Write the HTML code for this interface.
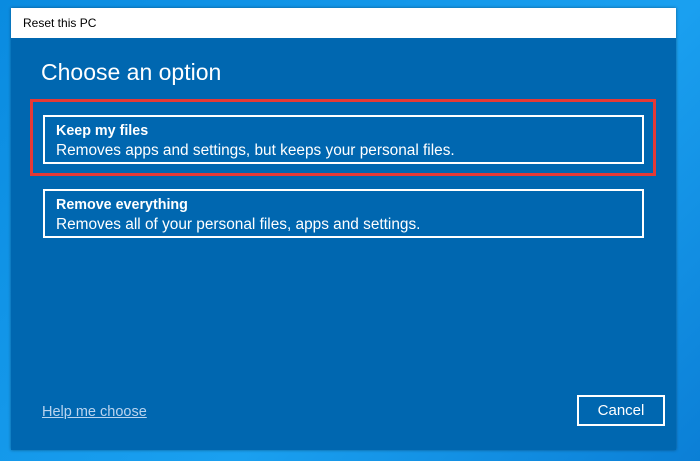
<!DOCTYPE html>
<html><head><style>
body{margin:0;width:700px;height:461px;overflow:hidden;background:linear-gradient(135deg,#0a8be0,#1aa0f0 60%,#0b7fd6);font-family:"Liberation Sans",sans-serif;position:relative}
.win{position:absolute;left:11px;top:8px;width:665px;height:442px;background:#0067b0;box-shadow:0 0 3px rgba(0,0,0,.4)}
.tb{height:30px;background:#fff;font-size:12px;color:#000;line-height:30px;padding-left:12px}
h1{position:absolute;left:30px;top:51px;margin:0;font-weight:normal;font-size:23px;color:#fff}
.red{position:absolute;left:19px;top:91px;width:620px;height:71px;border:3px solid #e53935;}
.opt{position:absolute;left:32px;width:597px;height:45px;border:2px solid #fff;color:#fff;font-size:15.4px}
.opt b{display:block;margin:6px 0 0 11px;font-size:14.3px}
.opt span{display:block;margin:3px 0 0 11px}
.help{position:absolute;left:31px;top:396px;color:#b9d4ef;text-decoration:underline;font-size:14.5px}
.btn{position:absolute;left:566px;top:387px;width:84px;height:27px;border:2px solid #fff;color:#fff;font-size:15px;text-align:center;line-height:27px}
</style></head><body>
<div class="win">
<div class="tb">Reset this PC</div>
<h1>Choose an option</h1>
<div class="red"></div>
<div class="opt" style="top:107px"><b>Keep my files</b><span>Removes apps and settings, but keeps your personal files.</span></div>
<div class="opt" style="top:181px"><b>Remove everything</b><span>Removes all of your personal files, apps and settings.</span></div>
<div class="help">Help me choose</div>
<div class="btn">Cancel</div>
</div>
</body></html>
